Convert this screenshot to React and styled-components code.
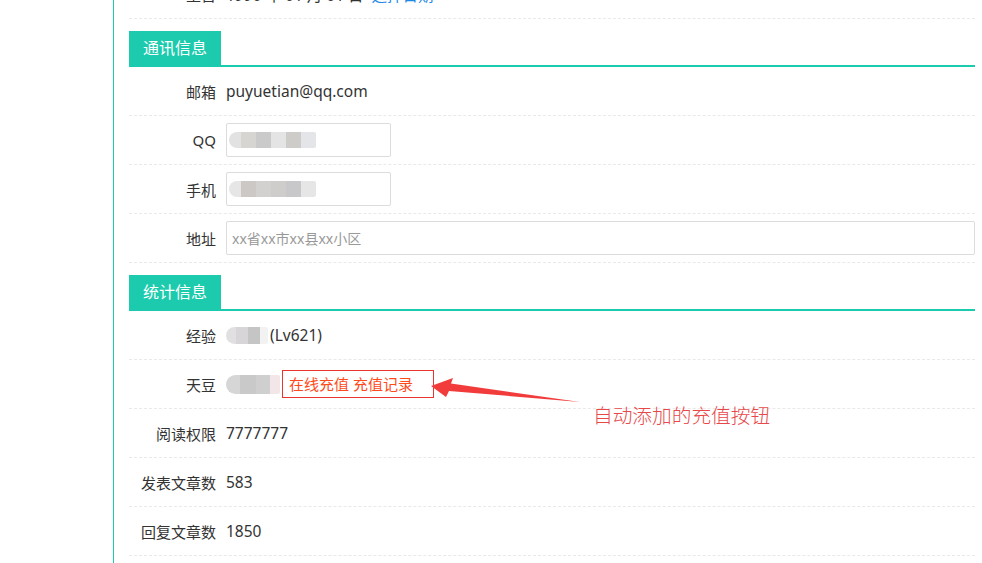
import React from "react";
import styled, { createGlobalStyle } from "styled-components";

const TEAL = "#1ccbad";

const GlobalStyle = createGlobalStyle`
  html, body { margin: 0; padding: 0; overflow: hidden; background: #fff; }
  body {
    font-family: "Noto Sans", "Noto Sans CJK SC", sans-serif;
    color: #333;
    font-size: 15px;
  }
`;

const Page = styled.div`
  margin-left: 113px;
  margin-top: -30px;
  border-left: 1px solid ${TEAL};
  padding: 0 7px 0 15px;
  min-height: 600px;
`;

const Row = styled.div`
  position: relative;
  display: flex;
  align-items: center;
  height: 48px;
  border-bottom: 1px dashed #e9e9e9;
`;

const Label = styled.div`
  flex: none;
  width: 87px;
  margin-right: 10px;
  text-align: right;
  font-size: 15px;
  color: #333;
`;

const Value = styled.div`
  display: flex;
  align-items: center;
  flex: 1;
  font-size: 15.5px;
  color: #333;
  white-space: nowrap;
`;

const Link = styled.span`
  color: #1e88e5;
  margin-left: 8px;
`;

const Heading = styled.div`
  display: flex;
  margin-top: 12px;
  border-bottom: 2px solid ${TEAL};
`;

const Tab = styled.div`
  background: ${TEAL};
  color: #fff;
  font-size: 16px;
  height: 34px;
  line-height: 34px;
  padding: 0 14px;
`;

const InputBox = styled.div`
  position: relative;
  box-sizing: border-box;
  height: 34px;
  width: ${(p) => (p.$full ? "auto" : "165px")};
  flex: ${(p) => (p.$full ? "1" : "none")};
  border: 1px solid #dcdcdc;
  border-radius: 2px;
  display: flex;
  align-items: center;
  padding-left: 5px;
  overflow: visible;
`;

const Placeholder = styled.span`
  color: #999;
  font-size: 14px;
`;

const Mosaic = styled.div`
  display: flex;
  height: ${(p) => p.$h}px;
  margin-left: ${(p) => p.$ml || 0}px;
  border-radius: ${(p) => p.$h / 2}px 2px 2px ${(p) => p.$h / 2}px;
  overflow: hidden;
  filter: blur(0.6px);
`;

const Cell = styled.div`
  width: ${(p) => p.$w}px;
  background: ${(p) => p.$c};
`;

const ChargeBox = styled.div`
  box-sizing: border-box;
  width: 152px;
  height: 28px;
  line-height: 26px;
  border: 1px solid #e8352f;
  padding-left: 6px;
  margin-left: 2px;
  color: #ff4a1a;
  font-size: 15px;
`;

const Annotation = styled.svg`
  position: absolute;
  left: 0;
  top: 0;
  overflow: visible;
  pointer-events: none;
`;

const Note = styled.div`
  position: absolute;
  left: 464px;
  top: 44px;
  font-size: 19.7px;
  line-height: 24px;
  font-weight: 300;
  color: #e8484a;
  white-space: nowrap;
`;

const Blur = ({ cells, h, ml }) => (
  <Mosaic $h={h} $ml={ml}>
    {cells.map(([w, c], i) => (
      <Cell key={i} $w={w} $c={c} />
    ))}
  </Mosaic>
);

function App() {
  return (
    <>
      <GlobalStyle />
      <Page>
        <Row>
          <Label>生日</Label>
          <Value>
            1990 年 01 月 01 日<Link>选择日期</Link>
          </Value>
        </Row>

        <Heading>
          <Tab>通讯信息</Tab>
        </Heading>
        <Row>
          <Label>邮箱</Label>
          <Value>puyuetian@qq.com</Value>
        </Row>
        <Row>
          <Label>QQ</Label>
          <Value>
            <InputBox>
              <Blur
                h={16}
                ml={-3}
                cells={[
                  [12, "#e2e2e2"],
                  [15, "#d6d5d2"],
                  [15, "#cacaca"],
                  [15, "#e4e4e4"],
                  [15, "#cdccc8"],
                  [15, "#e4e5e8"],
                ]}
              />
            </InputBox>
          </Value>
        </Row>
        <Row>
          <Label>手机</Label>
          <Value>
            <InputBox>
              <Blur
                h={16}
                ml={-3}
                cells={[
                  [12, "#e6e6e6"],
                  [15, "#cbc8c6"],
                  [15, "#d3d1cf"],
                  [15, "#cfcdcc"],
                  [15, "#c8c7c9"],
                  [15, "#e6e6e6"],
                ]}
              />
            </InputBox>
          </Value>
        </Row>
        <Row>
          <Label>地址</Label>
          <Value>
            <InputBox $full>
              <Placeholder>xx省xx市xx县xx小区</Placeholder>
            </InputBox>
          </Value>
        </Row>

        <Heading>
          <Tab>统计信息</Tab>
        </Heading>
        <Row>
          <Label>经验</Label>
          <Value>
            <Blur
              h={17}
              cells={[
                [10, "#e0e0e0"],
                [12, "#d7d5d8"],
                [12, "#c5c5c5"],
                [8, "#f2f2f2"],
              ]}
            />
            <span style={{ marginLeft: 2 }}>(Lv621)</span>
          </Value>
        </Row>
        <Row>
          <Label>天豆</Label>
          <Value>
            <Blur
              h={19}
              cells={[
                [14, "#d6d6d6"],
                [16, "#c9c9c9"],
                [14, "#cfcfcf"],
                [10, "#f3e6e8"],
              ]}
            />
            <ChargeBox>在线充值 充值记录</ChargeBox>
          </Value>
          <Annotation width="460" height="50">
            <polygon
              points="302,26 324,18 322,23.5 451,42 320,31 317,37"
              fill="#f23c3c"
            />
          </Annotation>
          <Note>自动添加的充值按钮</Note>
        </Row>
        <Row>
          <Label>阅读权限</Label>
          <Value>7777777</Value>
        </Row>
        <Row>
          <Label>发表文章数</Label>
          <Value>583</Value>
        </Row>
        <Row>
          <Label>回复文章数</Label>
          <Value>1850</Value>
        </Row>
      </Page>
    </>
  );
}

export default App;
